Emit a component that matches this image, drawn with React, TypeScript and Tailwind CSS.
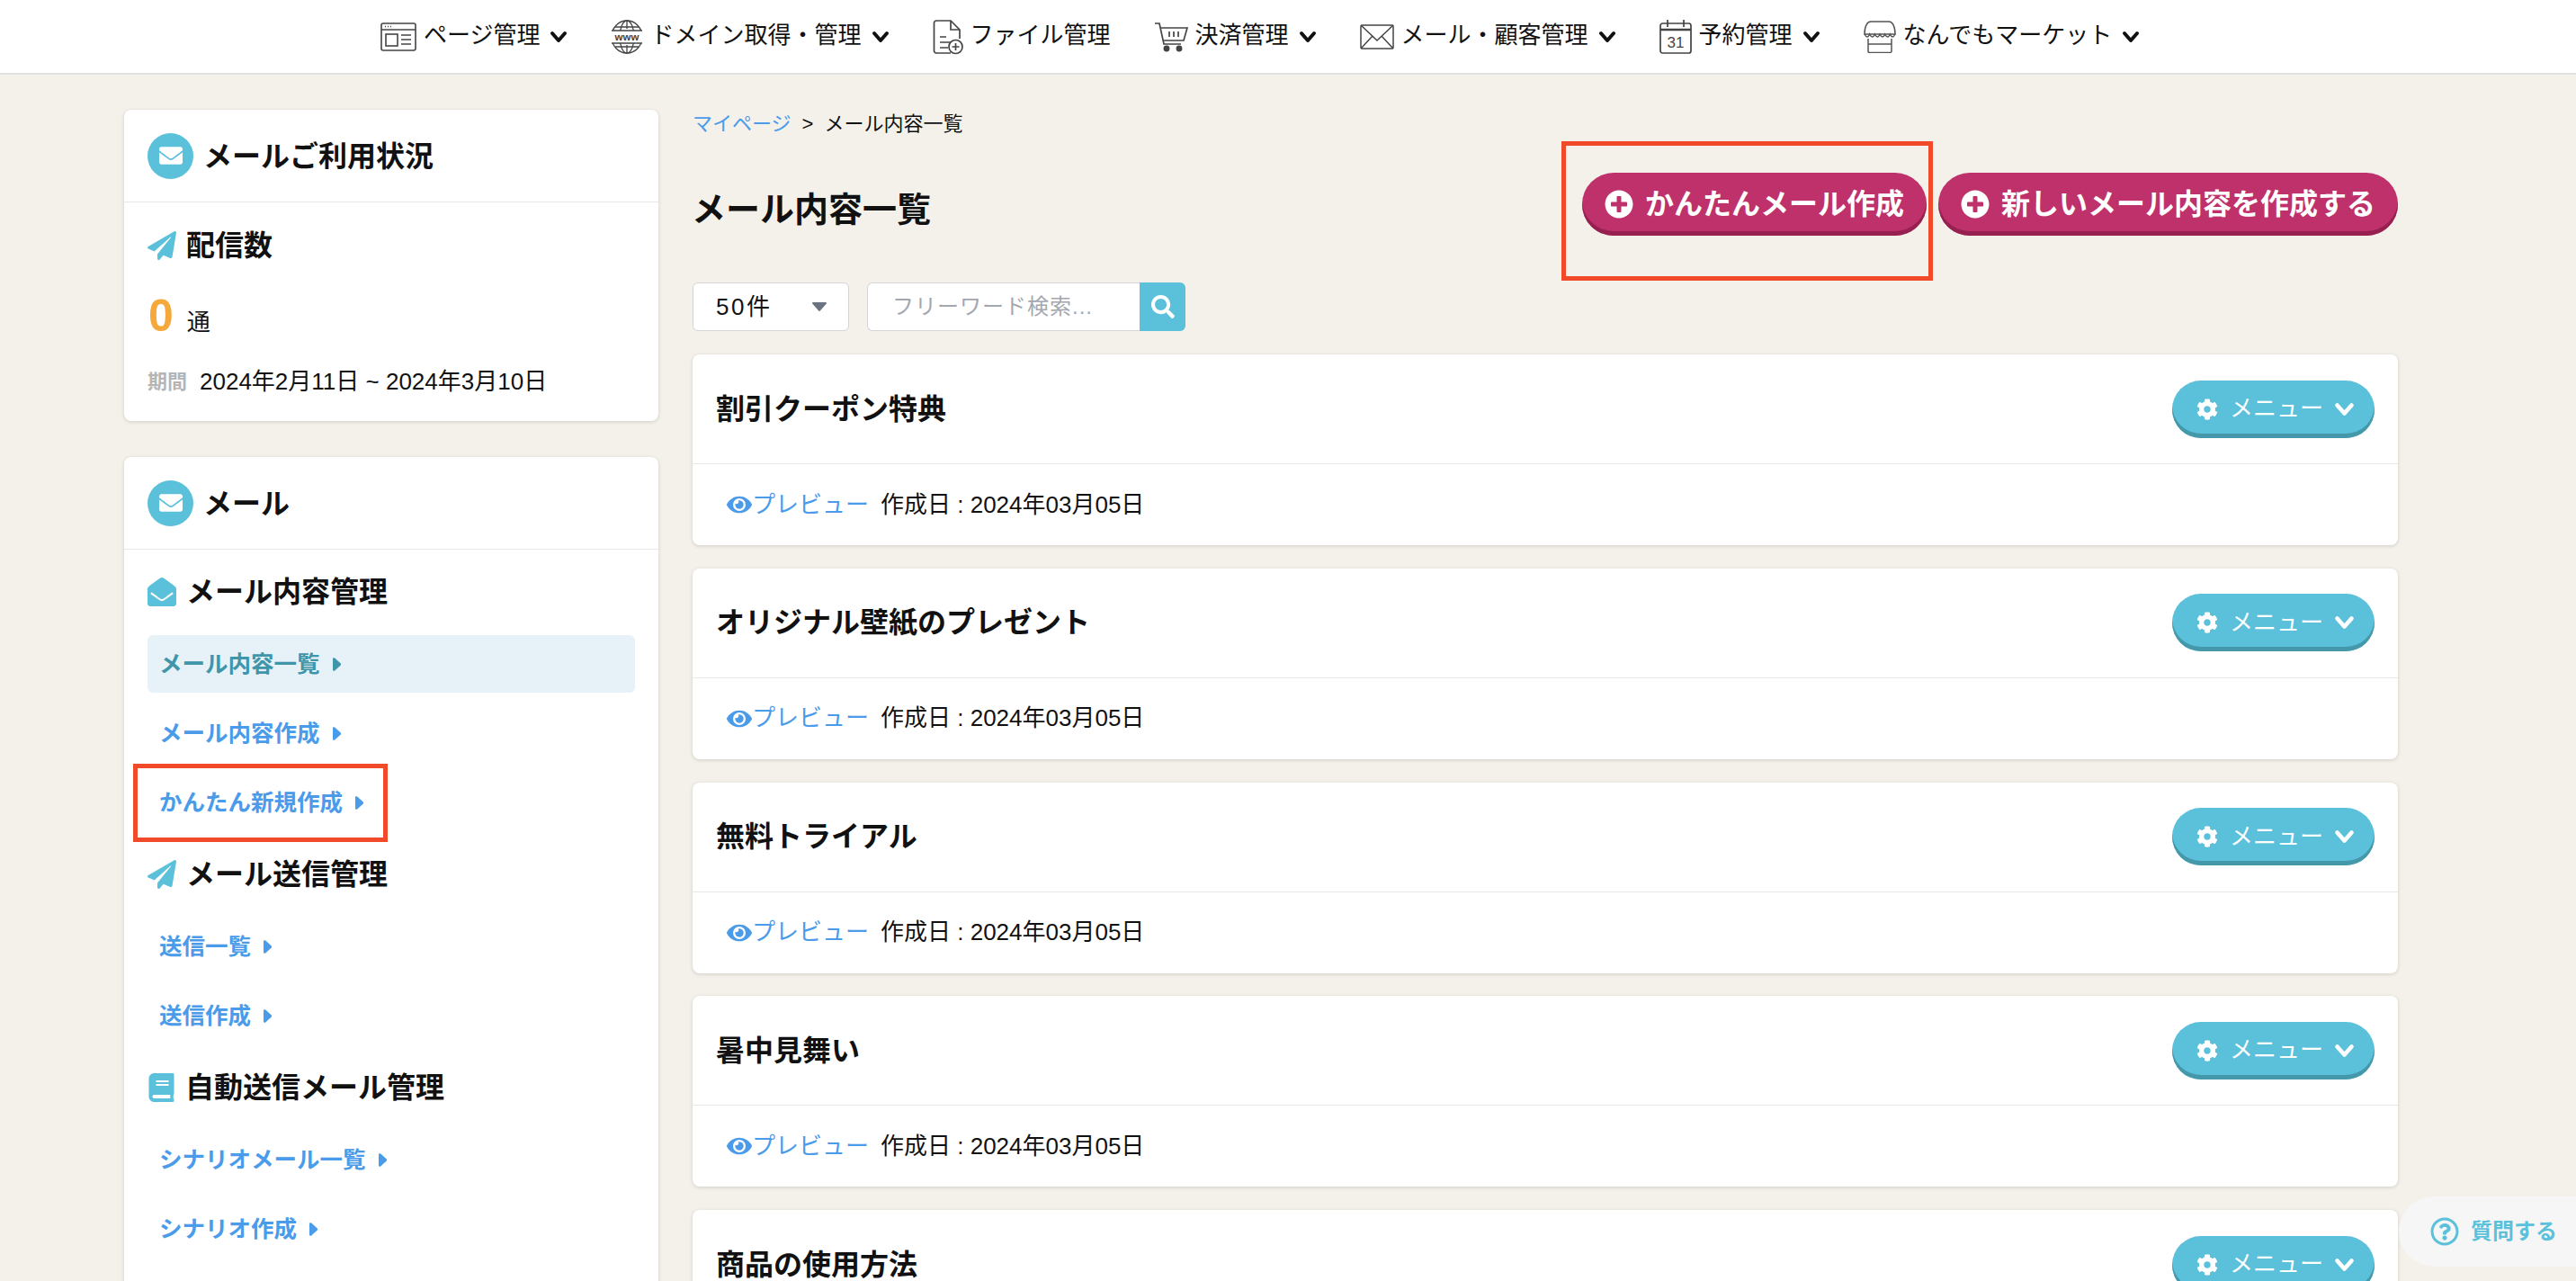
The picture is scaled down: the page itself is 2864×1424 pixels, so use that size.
import type { ReactNode } from 'react'
import {
  FaBook,
  FaCog,
  FaEnvelope,
  FaEnvelopeOpen,
  FaEye,
  FaPaperPlane,
  FaPlusCircle,
  FaRegQuestionCircle,
  FaSearch,
} from 'react-icons/fa'

const mails = ['割引クーポン特典', 'オリジナル壁紙のプレゼント', '無料トライアル', '暑中見舞い', '商品の使用方法']

function Chevron({ className }: { className: string }) {
  return (
    <svg viewBox="0 0 20 14" className={className} fill="none" stroke="currentColor" strokeWidth="4" strokeLinecap="round" strokeLinejoin="round">
      <path d="M3 3l7 8 7-8" />
    </svg>
  )
}

function Caret() {
  return (
    <svg viewBox="0 0 9 15" className="h-[15px] w-[9px]" fill="currentColor">
      <path d="M0 1.500C0 .3 1.200-.3 2.200.5l6.300 5.800a1.500 1.500 0 0 1 0 2.400L2.200 14.500C1.200 15.300 0 14.700 0 13.500z" />
    </svg>
  )
}

function PageIcon() {
  return (
    <svg viewBox="0 0 40 32" className="h-[32px] w-[40px]" fill="none" stroke="#444" strokeWidth="1.6">
      <rect x="1" y="1" width="38" height="30" rx="2" />
      <path d="M1 8h38" />
      <path d="M5 4.500h1M8 4.500h1M11 4.500h1" />
      <rect x="6" y="13" width="13" height="13" />
      <path d="M23 14h11M23 19h11M23 24h11" />
    </svg>
  )
}

function WwwIcon() {
  return (
    <svg viewBox="0 0 36 38" className="h-[38px] w-[36px]" fill="none" stroke="#444" strokeWidth="1.3">
      <ellipse cx="18" cy="19" rx="17" ry="18" />
      <ellipse cx="18" cy="19" rx="8" ry="18" />
      <path d="M18 1v9M18 28v9M5 8h26M5 30h26" />
      <rect x="0" y="12" width="36" height="14" fill="#fff" stroke="none" />
      <path d="M1 12h34M1 26h34" />
      <text x="18" y="23" textAnchor="middle" fontSize="11.500" fontWeight="700" fill="#444" stroke="none" fontFamily="Liberation Sans">
        www
      </text>
    </svg>
  )
}

function FileIcon() {
  return (
    <svg viewBox="0 0 34 40" className="h-[40px] w-[34px]" fill="none" stroke="#444" strokeWidth="1.7">
      <path d="M20 38H4a2.500 2.500 0 0 1-2.500-2.500v-31A2.500 2.500 0 0 1 4 2h16l10 10v10" />
      <path d="M20 2v10h10" />
      <path d="M8 20h7M8 26h12M8 32h9" />
      <circle cx="25.500" cy="31" r="7.500" />
      <path d="M25.500 27v8M21.500 31h8" />
    </svg>
  )
}

function CartIcon() {
  return (
    <svg viewBox="0 0 38 34" className="h-[34px] w-[38px]" fill="none" stroke="#444" strokeWidth="1.7">
      <path d="M1 2h5l5 23h19" />
      <path d="M7 7h30l-4 14H11" />
      <path d="M17 11v6M22 11v6M27 11v6" />
      <circle cx="14" cy="30" r="2.600" fill="#444" />
      <circle cx="28" cy="30" r="2.600" fill="#444" />
    </svg>
  )
}

function MailIcon() {
  return (
    <svg viewBox="0 0 38 28" className="h-[28px] w-[38px]" fill="none" stroke="#444" strokeWidth="1.500">
      <rect x="1" y="1" width="36" height="26" rx="1.500" />
      <path d="M1 1l18 17L37 1M1 27l13-14M37 27L24 13" />
    </svg>
  )
}

function CalendarIcon() {
  return (
    <svg viewBox="0 0 36 38" className="h-[38px] w-[36px]" fill="none" stroke="#444" strokeWidth="1.700">
      <rect x="1" y="4" width="34" height="33" rx="2.500" />
      <path d="M1 11h34" strokeWidth="2.400" />
      <path d="M9 0v8M27 0v8" />
      <text x="18" y="31" textAnchor="middle" fontSize="17" fill="#444" stroke="none" fontFamily="Liberation Sans">
        31
      </text>
    </svg>
  )
}

function MarketIcon() {
  return (
    <svg viewBox="0 0 36 36" className="h-[36px] w-[36px]" fill="none" stroke="#555" strokeWidth="1.500">
      <path d="M8 1h20c4 0 7 5 7 14H1C1 6 4 1 8 1z" />
      <path d="M1 15c2 4 4 4 5.700 0 2 4 4 4 5.700 0 2 4 4 4 5.600 0 2 4 4 4 5.700 0 2 4 4 4 5.600 0 2 4 3.700 4 5.700 0" />
      <path d="M5 20v14a1.500 1.500 0 0 0 1.500 1.500h23A1.500 1.500 0 0 0 31 34V20M5 26h26" />
    </svg>
  )
}

function NavItem({ icon, label, caret = true }: { icon: ReactNode; label: string; caret?: boolean }) {
  return (
    <div className="flex h-[40px] items-center">
      {icon}
      <span className="ml-[8px] pb-[3px] text-[26px] leading-none whitespace-nowrap text-[#111]">{label}</span>
      {caret && <Chevron className="ml-[11px] h-[14px] w-[20px] text-[#111]" />}
    </div>
  )
}

function SideHeader({ title }: { title: string }) {
  return (
    <div className="flex h-[103px] items-center gap-[11px] border-b border-[#e8e8e8] px-[26px]">
      <span className="flex h-[51px] w-[51px] items-center justify-center rounded-full bg-[#5bc0da]">
        <FaEnvelope className="h-[26px] w-[26px] text-white" />
      </span>
      <span className="pt-[2px] text-[32px] font-bold text-[#111]">{title}</span>
    </div>
  )
}

function SideHeading({ icon, label }: { icon: ReactNode; label: string }) {
  return (
    <div className="flex h-[48px] items-center gap-[11px] text-[32px] font-bold text-[#111]">
      {icon}
      <span>{label}</span>
    </div>
  )
}

function SideLink({ label, active, marked }: { label: string; active?: boolean; marked?: boolean }) {
  return (
    <div
      className={
        active
          ? 'relative flex h-[64px] items-center gap-[14px] rounded-[6px] bg-[#e6f2f7] px-[13px] text-[25.500px] font-bold text-[#3f95a9]'
          : 'relative flex h-[64px] items-center gap-[14px] rounded-[6px] px-[13px] text-[25.500px] font-bold text-[#4a9bea]'
      }
    >
      <span>{label}</span>
      <Caret />
      {marked && <div className="absolute top-[-11px] left-[-16px] h-[87px] w-[283px] border-[5px] border-[#f04a2a]" />}
    </div>
  )
}

function MailCard({ title }: { title: string }) {
  return (
    <div className="h-[212px] shrink-0 rounded-[8px] bg-white shadow-[0_1px_4px_rgba(0,0,0,0.15)]">
      <div className="flex h-[122px] items-center justify-between border-b border-[#e8e8e8] pr-[26px] pl-[26px]">
        <span className="text-[32px] font-bold text-[#111]">{title}</span>
        <button className="flex h-[64px] w-[225px] items-center rounded-full bg-[#5bc0da] pl-[27px] text-[26px] text-white shadow-[inset_0_-5px_0_#4598a9]">
          <FaCog className="h-[24px] w-[24px]" />
          <span className="ml-[13px]">メニュー</span>
          <Chevron className="ml-[11px] h-[16px] w-[25px]" />
        </button>
      </div>
      <div className="flex h-[90px] items-center pl-[38px] text-[26px]">
        <FaEye className="h-[28px] w-[28px] text-[#4a9bea]" />
        <span className="text-[#4a9bea]">プレビュー</span>
        <span className="ml-[13px] text-[#111]">作成日 : 2024年03月05日</span>
      </div>
    </div>
  )
}

function CreateButton({ label, marked }: { label: string; marked?: boolean }) {
  return (
    <button className="relative flex h-[70px] items-center gap-[13px] rounded-full bg-[#bf316a] px-[25px] text-[32px] font-bold whitespace-nowrap text-white shadow-[inset_0_-5px_0_#962150]">
      <FaPlusCircle className="h-[32px] w-[32px]" />
      <span>{label}</span>
      {marked && <div className="absolute top-[-35px] right-[-7px] bottom-[-50px] left-[-23px] border-[5px] border-[#f04a2a]" />}
    </button>
  )
}

export default function App() {
  return (
    <div className="relative h-[1424px] w-[2864px] overflow-hidden bg-[#f4f1ea] [font-family:'Liberation_Sans','Noto_Sans_CJK_JP',sans-serif]">
      {/* Top nav */}
      <header className="flex h-[83px] items-center gap-[48px] border-b-2 border-[#e2e2e2] bg-white pl-[423px]">
        <NavItem icon={<PageIcon />} label="ページ管理" />
        <NavItem icon={<WwwIcon />} label="ドメイン取得・管理" />
        <NavItem icon={<FileIcon />} label="ファイル管理" caret={false} />
        <NavItem icon={<CartIcon />} label="決済管理" />
        <NavItem icon={<MailIcon />} label="メール・顧客管理" />
        <NavItem icon={<CalendarIcon />} label="予約管理" />
        <NavItem icon={<MarketIcon />} label="なんでもマーケット" />
      </header>

      <div className="flex gap-[38px] pt-[39px] pl-[138px]">
        {/* Sidebar */}
        <aside className="flex w-[594px] shrink-0 flex-col gap-[40px]">
          <section className="h-[346px] rounded-[8px] bg-white shadow-[0_1px_4px_rgba(0,0,0,0.15)]">
            <SideHeader title="メールご利用状況" />
            <div className="px-[26px] pt-[24px]">
              <SideHeading icon={<FaPaperPlane className="h-[32px] w-[32px] text-[#5bc0da]" />} label="配信数" />
              <div className="mt-[24px] flex h-[60px] items-end">
                <span className="ml-[1px] text-[50px] leading-[60px] font-bold text-[#f6a93b]">0</span>
                <span className="ml-[15px] pb-[3px] text-[26px] leading-[40px] text-[#111]">通</span>
              </div>
              <div className="mt-[24px] flex items-center">
                <span className="text-[22px] font-bold text-[#b5b5b5]">期間</span>
                <span className="ml-[14px] text-[26px] text-[#111]">2024年2月11日 ~ 2024年3月10日</span>
              </div>
            </div>
          </section>

          <section className="h-[1100px] rounded-[8px] bg-white shadow-[0_1px_4px_rgba(0,0,0,0.15)]">
            <SideHeader title="メール" />
            <div className="px-[26px] pt-[23px]">
              <SideHeading icon={<FaEnvelopeOpen className="h-[32px] w-[32px] text-[#5bc0da]" />} label="メール内容管理" />
              <div className="mt-[24px] flex flex-col gap-[13px]">
                <SideLink label="メール内容一覧" active />
                <SideLink label="メール内容作成" />
                <SideLink label="かんたん新規作成" marked />
              </div>
              <div className="mt-[24px]">
                <SideHeading icon={<FaPaperPlane className="h-[32px] w-[32px] text-[#5bc0da]" />} label="メール送信管理" />
              </div>
              <div className="mt-[24px] flex flex-col gap-[13px]">
                <SideLink label="送信一覧" />
                <SideLink label="送信作成" />
              </div>
              <div className="mt-[24px]">
                <SideHeading icon={<FaBook className="h-[32px] w-[31px] text-[#5bc0da]" />} label="自動送信メール管理" />
              </div>
              <div className="mt-[24px] flex flex-col gap-[13px]">
                <SideLink label="シナリオメール一覧" />
                <SideLink label="シナリオ作成" />
              </div>
            </div>
          </section>
        </aside>

        {/* Main */}
        <main className="w-[1896px] shrink-0">
          <div className="flex h-[30px] items-center text-[22px] text-[#111]">
            <span className="text-[#4a9bea]">マイページ</span>
            <span className="ml-[12px]">&gt;</span>
            <span className="ml-[12px]">メール内容一覧</span>
          </div>

          <div className="mt-[40px] flex h-[70px] items-center justify-between">
            <h1 className="mt-[12px] -ml-[1px] text-[38px] font-bold text-[#111]">メール内容一覧</h1>
            <div className="flex gap-[13px]">
              <CreateButton label="かんたんメール作成" marked />
              <CreateButton label="新しいメール内容を作成する" />
            </div>
          </div>

          <div className="mt-[52px] flex h-[54px] gap-[20px]">
            <div className="flex w-[174px] items-center justify-between rounded-[6px] border border-[#d5d5d8] bg-white pr-[24px] pl-[25px] text-[26px] tracking-[2.500px] text-[#111]">
              <span>50件</span>
              <svg viewBox="0 0 16 10" className="h-[10px] w-[16px]" fill="#6b7280">
                <path d="M1 0h14a1 1 0 0 1 .8 1.600L8.800 9.500a1 1 0 0 1-1.600 0L.2 1.600A1 1 0 0 1 1 0z" />
              </svg>
            </div>
            <div className="flex">
              <input
                placeholder="フリーワード検索..."
                className="h-[54px] w-[303px] rounded-l-[6px] border border-r-0 border-[#d5d5d8] bg-white pl-[27px] text-[24px] tracking-[1px] placeholder:text-[#a3a7b0]"
              />
              <button className="flex h-[54px] w-[51px] items-center justify-center rounded-r-[6px] bg-[#5bc0da]">
                <FaSearch className="h-[26px] w-[26px] text-white" />
              </button>
            </div>
          </div>

          <div className="mt-[26px] flex flex-col gap-[25.750px]">
            {mails.map((title) => (
              <MailCard key={title} title={title} />
            ))}
          </div>
        </main>
      </div>

      {/* Help bubble */}
      <div className="absolute top-[1330px] left-[2667px] flex h-[78px] w-[220px] items-center gap-[13px] rounded-l-[40px] bg-[#f6f6f6] pl-[35px] text-[24px] font-bold text-[#5bc0da]">
        <FaRegQuestionCircle className="h-[32px] w-[32px]" />
        <span>質問する</span>
      </div>
    </div>
  )
}
